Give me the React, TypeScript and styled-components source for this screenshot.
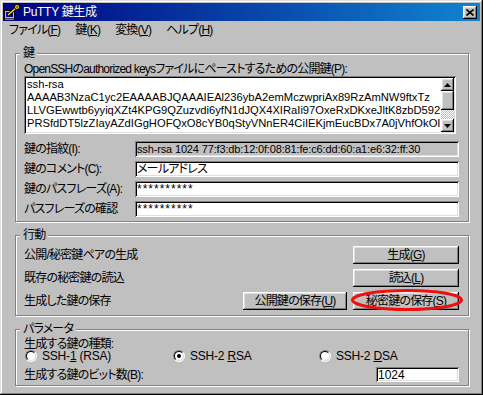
import React from "react";
import styled, { createGlobalStyle } from "styled-components";

const Global = createGlobalStyle`
  html, body { margin: 0; padding: 0; background: #c0c0c0; }
  body {
    font-family: "Liberation Sans", "Noto Sans CJK JP", sans-serif;
    font-size: 12px;
    letter-spacing: -0.8px;
    font-feature-settings: "palt" 1;
    color: #000;
  }
  * { box-sizing: border-box; }
`;

const raised = `
  box-shadow: inset -1px -1px #000, inset 1px 1px #fff, inset -2px -2px #808080, inset 2px 2px #dfdfdf;
`;
const sunken = `
  box-shadow: inset 1px 1px #808080, inset -1px -1px #fff, inset 2px 2px #000, inset -2px -2px #dfdfdf;
`;

const Window = styled.div`
  width: 483px;
  height: 395px;
  padding: 3px;
  background: #c0c0c0;
  box-shadow: inset -1px -1px #000, inset 1px 1px #dfdfdf, inset -2px -2px #808080, inset 2px 2px #fff;
  display: flex;
  flex-direction: column;
  overflow: hidden;
`;

const TitleBar = styled.div`
  height: 18px;
  flex: none;
  display: flex;
  align-items: center;
  gap: 3px;
  padding: 0 3px 0 1px;
  background: linear-gradient(to right, #000080, #1084d0);
  color: #fff;
`;

const TitleText = styled.span`
  line-height: 12px;
  font-size: 12px;
  letter-spacing: -0.3px;
`;

const CloseButton = styled.div`
  margin-left: auto;
  width: 14px;
  height: 13px;
  background: #c0c0c0;
  ${raised}
  display: flex;
  align-items: center;
  justify-content: center;
`;

const MenuBar = styled.div`
  height: 18px;
  flex: none;
  display: flex;
  align-items: center;
`;

const MenuItem = styled.span`
  padding: 0 6px;
  line-height: 12px;
  margin-right: 3px;
  white-space: nowrap;
`;

const Acc = styled.u`
  text-decoration: underline;
  text-underline-offset: 1px;
`;

const Content = styled.div`
  flex: 1;
  display: flex;
  flex-direction: column;
  gap: 7px;
  padding: 8px 11px 0 12px;
`;

const GroupBox = styled.section<{ $pt: number; $pb: number }>`
  position: relative;
  margin-top: 6px;
  border: 1px solid #808080;
  box-shadow: inset 1px 1px #fff, 1px 1px #fff;
  padding: ${(p) => p.$pt}px 9px ${(p) => p.$pb}px 8px;
`;

const Caption = styled.span`
  position: absolute;
  top: -7px;
  left: 4px;
  padding: 0 3px;
  height: 12px;
  line-height: 12px;
  background: #c0c0c0;
`;

const Label = styled.div`
  line-height: 12px;
  white-space: nowrap;
`;

const KeyBox = styled.div`
  margin-top: 1px;
  width: 432px;
  height: 58px;
  padding: 2px;
  background: #fff;
  ${sunken}
  display: flex;
`;

const KeyText = styled.div`
  flex: 1;
  overflow: hidden;
  white-space: pre;
  font-family: "Liberation Sans", sans-serif;
  font-size: 11.2px;
  letter-spacing: 0;
  line-height: 13px;
  padding-left: 1px;
`;

const ScrollBar = styled.div`
  width: 13px;
  flex: none;
  display: flex;
  flex-direction: column;
`;

const ScrollButton = styled.div<{ $h: number }>`
  height: ${(p) => p.$h}px;
  flex: none;
  background: #c0c0c0;
  ${raised}
  display: flex;
  align-items: center;
  justify-content: center;
`;

const ScrollTrack = styled.div`
  flex: 1;
  background-image: repeating-conic-gradient(#fff 0 25%, #c0c0c0 0 50%);
  background-size: 2px 2px;
`;

const FieldGrid = styled.div`
  margin-top: 7px;
  display: grid;
  grid-template-columns: 111px 324px;
  grid-auto-rows: 16px;
  row-gap: 4px;
  align-items: center;
`;

const Field = styled.div<{ $bg?: string; $w?: number }>`
  height: 16px;
  ${(p) => (p.$w ? `width: ${p.$w}px;` : "")}
  padding: 0 2px;
  display: flex;
  align-items: center;
  background: ${(p) => p.$bg || "#fff"};
  ${sunken}
  white-space: nowrap;
  overflow: hidden;
  line-height: 12px;
`;

const Mono = styled.span`
  font-family: "Liberation Sans", sans-serif;
  font-size: 11px;
  letter-spacing: -0.15px;
`;

const Stars = styled.span`
  font-family: "Liberation Sans", sans-serif;
  letter-spacing: 1px;
`;

const Plain = styled.span`
  letter-spacing: 0;
`;

const ActionList = styled.div`
  display: flex;
  flex-direction: column;
  gap: 5px;
`;

const ActionRow = styled.div`
  height: 18px;
  display: flex;
  align-items: center;
`;

const ActionLabel = styled.span`
  flex: 1;
  line-height: 12px;
`;

const ButtonGroup = styled.div`
  display: flex;
  gap: 6px;
`;

const Button = styled.div<{ $w: number }>`
  position: relative;
  width: ${(p) => p.$w}px;
  height: 18px;
  background: #c0c0c0;
  ${raised}
  display: flex;
  align-items: center;
  justify-content: center;
  line-height: 12px;
  white-space: nowrap;
`;

const Highlight = styled.svg`
  position: absolute;
  left: -2px;
  top: -3px;
  width: 112px;
  height: 22px;
  pointer-events: none;
  overflow: visible;
`;

const RadioRow = styled.div`
  height: 12px;
  padding-left: 1px;
  display: grid;
  grid-template-columns: 148px 146px 1fr;
  align-items: center;
`;

const RadioItem = styled.div`
  display: flex;
  align-items: center;
  gap: 5px;
  line-height: 12px;
  white-space: nowrap;
  letter-spacing: -0.2px;
`;

const RadioOuter = styled.span`
  width: 12px;
  height: 12px;
  flex: none;
  border-radius: 50%;
  border: 1px solid;
  border-color: #808080 #fff #fff #808080;
  display: flex;
  align-items: center;
  justify-content: center;
`;

const RadioInner = styled.span`
  width: 10px;
  height: 10px;
  border-radius: 50%;
  border: 1px solid;
  border-color: #000 #dfdfdf #dfdfdf #000;
  background: #fff;
  display: flex;
  align-items: center;
  justify-content: center;
`;

const RadioDot = styled.span<{ $on: boolean }>`
  width: 4px;
  height: 4px;
  border-radius: 50%;
  background: ${(p) => (p.$on ? "#000" : "transparent")};
`;

const BitsRow = styled.div`
  margin-top: 5px;
  height: 15px;
  display: flex;
  align-items: center;
  justify-content: space-between;
`;

const BitsField = styled(Field)`
  height: 15px;
`;

const Radio = ({ on, children }: { on: boolean; children: React.ReactNode }) => (
  <RadioItem>
    <RadioOuter>
      <RadioInner>
        <RadioDot $on={on} />
      </RadioInner>
    </RadioOuter>
    <span>{children}</span>
  </RadioItem>
);

const AppIcon = () => (
  <svg width="16" height="16" viewBox="0 0 16 16" style={{ flex: "none" }}>
    <rect x="0.5" y="6.5" width="10" height="8" fill="#c0c0c0" stroke="#000" />
    <rect x="2" y="8" width="7" height="5" fill="#0000a8" />
    <rect x="1" y="14.5" width="9" height="1.5" fill="#808080" />
    <line x1="4" y1="11" x2="12" y2="4" stroke="#000" strokeWidth="3" />
    <line x1="4" y1="11" x2="12" y2="4" stroke="#ffe000" strokeWidth="1.5" />
    <circle cx="13" cy="3" r="2.5" fill="#ffe000" stroke="#000" />
    <circle cx="13" cy="3" r="0.8" fill="#000" />
  </svg>
);

const CloseIcon = () => (
  <svg width="8" height="7" viewBox="0 0 8 7">
    <path d="M0.5 0.5 L7.5 6.5 M7.5 0.5 L0.5 6.5" stroke="#000" strokeWidth="1.6" />
  </svg>
);

const Arrow = ({ up }: { up: boolean }) => (
  <svg width="7" height="4" viewBox="0 0 7 4">
    <path d={up ? "M3.5 0 L7 4 L0 4 Z" : "M0 0 L7 0 L3.5 4 Z"} fill="#000" />
  </svg>
);

const keyLines = [
  "ssh-rsa",
  "AAAAB3NzaC1yc2EAAAABJQAAAIEAl236ybA2emMczwpriAx89RzAmNW9ftxTz",
  "LLVGEwwtb6yyiqXZt4KPG9QZuzvdi6yfN1dJQX4XIRaIi97OxeRxDKxeJltK8zbD592",
  "PRSfdDT5lzZIayAZdIGgHOFQxO8cYB0qStyVNnER4CiIEKjmEucBDx7A0jVhfOkOI",
];

export default function App() {
  return (
    <>
      <Global />
      <Window>
        <TitleBar>
          <AppIcon />
          <TitleText>PuTTY 鍵生成</TitleText>
          <CloseButton>
            <CloseIcon />
          </CloseButton>
        </TitleBar>
        <MenuBar>
          <MenuItem>ファイル(<Acc>F</Acc>)</MenuItem>
          <MenuItem>鍵(<Acc>K</Acc>)</MenuItem>
          <MenuItem>変換(<Acc>V</Acc>)</MenuItem>
          <MenuItem>ヘルプ(<Acc>H</Acc>)</MenuItem>
        </MenuBar>
        <Content>
          <GroupBox $pt={9} $pb={4}>
            <Caption>鍵</Caption>
            <Label>OpenSSHのauthorized keysファイルにペーストするための公開鍵(P):</Label>
            <KeyBox>
              <KeyText>{keyLines.join("\n")}</KeyText>
              <ScrollBar>
                <ScrollButton $h={13}>
                  <Arrow up />
                </ScrollButton>
                <ScrollButton $h={19} />
                <ScrollTrack />
                <ScrollButton $h={13}>
                  <Arrow up={false} />
                </ScrollButton>
              </ScrollBar>
            </KeyBox>
            <FieldGrid>
              <Label>鍵の指紋(I):</Label>
              <Field $bg="#c0c0c0">
                <Mono>ssh-rsa 1024 77:f3:db:12:0f:08:81:fe:c6:dd:60:a1:e6:32:ff:30</Mono>
              </Field>
              <Label>鍵のコメント(C):</Label>
              <Field>メールアドレス</Field>
              <Label>鍵のパスフレーズ(A):</Label>
              <Field>
                <Stars>**********</Stars>
              </Field>
              <Label>パスフレーズの確認</Label>
              <Field>
                <Stars>**********</Stars>
              </Field>
            </FieldGrid>
          </GroupBox>

          <GroupBox $pt={10} $pb={5}>
            <Caption>行動</Caption>
            <ActionList>
              <ActionRow>
                <ActionLabel>公開/秘密鍵ペアの生成</ActionLabel>
                <Button $w={106}>生成(<Acc>G</Acc>)</Button>
              </ActionRow>
              <ActionRow>
                <ActionLabel>既存の秘密鍵の読込</ActionLabel>
                <Button $w={106}>読込(<Acc>L</Acc>)</Button>
              </ActionRow>
              <ActionRow>
                <ActionLabel>生成した鍵の保存</ActionLabel>
                <ButtonGroup>
                  <Button $w={104}>公開鍵の保存(<Acc>U</Acc>)</Button>
                  <Button $w={106}>
                    秘密鍵の保存(<Acc>S</Acc>)
                    <Highlight viewBox="0 0 112 22">
                      <ellipse cx="56" cy="11" rx="54.5" ry="9.5" fill="none" stroke="#ee1010" strokeWidth="3" />
                    </Highlight>
                  </Button>
                </ButtonGroup>
              </ActionRow>
            </ActionList>
          </GroupBox>

          <GroupBox $pt={8} $pb={3}>
            <Caption>パラメータ</Caption>
            <Label>生成する鍵の種類:</Label>
            <RadioRow>
              <Radio on={false}>
                SSH-<Acc>1</Acc> (RSA)
              </Radio>
              <Radio on>
                SSH-2 <Acc>R</Acc>SA
              </Radio>
              <Radio on={false}>
                SSH-2 <Acc>D</Acc>SA
              </Radio>
            </RadioRow>
            <BitsRow>
              <Label>生成する鍵のビット数(B):</Label>
              <BitsField $w={83}>
                <Plain>1024</Plain>
              </BitsField>
            </BitsRow>
          </GroupBox>
        </Content>
      </Window>
    </>
  );
}
